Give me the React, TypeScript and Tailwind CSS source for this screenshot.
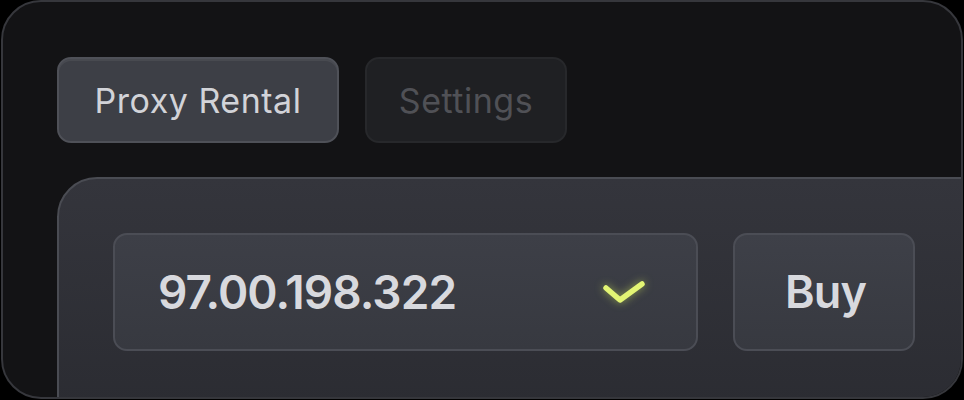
import { useState } from "react";

const font = { fontFamily: "Inter, 'Noto Sans', sans-serif" };

const Tab = ({ label, active, onClick, width }: { label: string; active?: boolean; onClick: () => void; width: string }) => (
  <button
    onClick={onClick}
    className={
      (active
        ? "bg-[#3d3f46] border-[#4f5158] text-[#d2d3d8] shadow-[inset_0_2px_0_rgba(255,255,255,0.06)]"
        : "bg-[#1f2023] border-[#27282b] text-[#505156]") +
      " h-[86px] rounded-[14px] border-2 text-[34px] tracking-[0.015em] flex items-center justify-center " +
      width
    }
  >
    {label}
  </button>
);

export default function App() {
  const [tab, setTab] = useState("rental");

  return (
    <div className="w-[964px] h-[400px] bg-black pl-[1px]" style={font}>
      <div className="w-[962px] h-[399px] rounded-[40px] border-2 border-[#36373c] bg-[#131315] overflow-hidden flex flex-col pl-[54px] pt-[55px]">
        <div className="flex gap-[26px]">
          <Tab label="Proxy Rental" width="w-[282px]" active={tab === "rental"} onClick={() => setTab("rental")} />
          <Tab label="Settings" width="w-[202px]" active={tab === "settings"} onClick={() => setTab("settings")} />
        </div>

        <div className="mt-[34px] flex-1 mr-[-40px] mb-[-40px] rounded-tl-[40px] border-2 border-[#4a4c53] bg-gradient-to-b from-[#34353c] to-[#2a2b31] pl-[54px] pt-[54px] flex items-start gap-[35px]">
          <div className="w-[585px] h-[118px] rounded-[14px] bg-gradient-to-b from-[#3d3f47] to-[#373940] border-2 border-[#4b4d55] flex items-center justify-between pl-[43px] pr-[50px]">
            <span className="text-[46px] font-semibold text-[#d8d9de] tracking-[-0.02em]">97.00.198.322</span>
            <svg width="44" height="26" viewBox="0 0 44 26" className="drop-shadow-[0_0_4px_rgba(215,240,90,0.55)]">
              <path d="M4 9 L18 21 L40 5" fill="none" stroke="#e3f574" strokeWidth="5.5" strokeLinecap="round" strokeLinejoin="round" />
            </svg>
          </div>
          <button className="w-[182px] h-[118px] rounded-[14px] bg-gradient-to-b from-[#3e4048] to-[#373940] border-2 border-[#4b4d55] text-[45px] font-semibold text-[#d8d9de] tracking-[-0.02em] pl-[3px]">
            Buy
          </button>
        </div>
      </div>
    </div>
  );
}
